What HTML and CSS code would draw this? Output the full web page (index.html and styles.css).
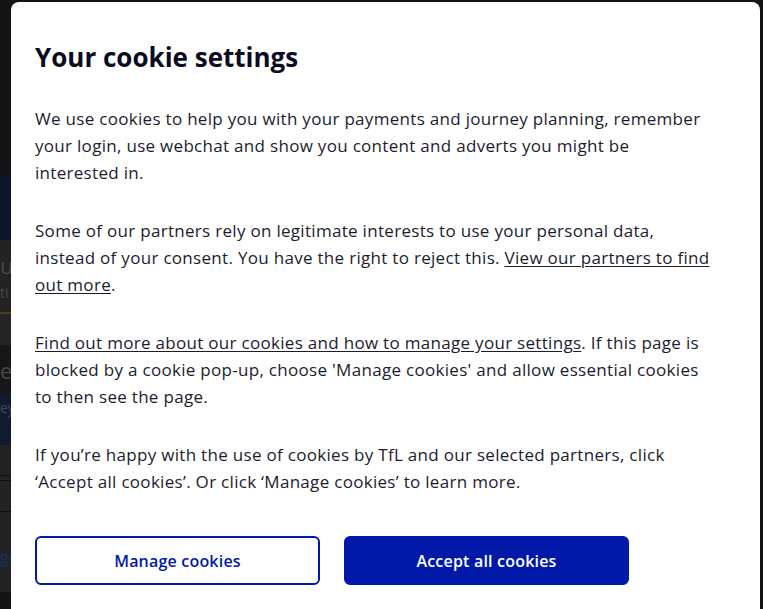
FILE: index.html
```html
<!DOCTYPE html>
<html lang="en">
<head>
<meta charset="utf-8">
<title>Your cookie settings</title>
<link rel="stylesheet" href="styles.css">
</head>
<body>
<div class="page">
  <div class="bg bg-top"></div>
  <div class="bg bg-navy"></div>
  <div class="bg bg-hero"><span class="bg-text">us</span><span class="bg-sub">ti</span></div>
  <div class="bg bg-rule"></div>
  <div class="bg bg-grey"></div>
  <div class="bg bg-dark"><span class="bg-text">ey</span></div>
  <div class="bg bg-blue"><span class="bg-sub">ey</span></div>
  <div class="bg bg-row"></div>
  <div class="bg bg-row bg-row-short"></div>
  <div class="bg bg-row"></div>
  <div class="bg bg-foot"><span class="bg-link">ge</span></div>
</div>
<div class="overlay"></div>
<div class="modal" role="dialog" aria-labelledby="cookie-title">
  <h2 id="cookie-title" class="modal-title">Your cookie settings</h2>
  <div class="modal-body">
    <p>We use cookies to help you with your payments and journey planning, remember<br>your login, use webchat and show you content and adverts you might be<br>interested in.</p>
    <p>Some of our partners rely on legitimate interests to use your personal data,<br>instead of your consent. You have the right to reject this. <a href="#">View our partners to find<br>out more</a>.</p>
    <p><a href="#">Find out more about our cookies and how to manage your settings</a>. If this page is<br>blocked by a cookie pop-up, choose 'Manage cookies' and allow essential cookies<br>to then see the page.</p>
    <p>If you’re happy with the use of cookies by TfL and our selected partners, click<br>‘Accept all cookies’. Or click ‘Manage cookies’ to learn more.</p>
  </div>
  <div class="modal-actions">
    <button class="btn btn-secondary" type="button">Manage cookies</button>
    <button class="btn btn-primary" type="button">Accept all cookies</button>
  </div>
</div>
</body>
</html>
```

FILE: styles.css
```css
html, body {
  margin: 0;
  padding: 0;
  height: 100%;
  overflow: hidden;
}
body {
  background: #18181b;
  font-family: "Open Sans", "Liberation Sans", sans-serif;
  color: #0b0c22;
}
.page {
  display: flex;
  flex-direction: column;
  width: 60px;
}
.bg { width: 100%; overflow: hidden; }
.bg-top { height: 175px; background: #17171b; }
.bg-navy { height: 65px; background: #111a32; }
.bg-hero { height: 72px; background: #2b2a29; display: flex; flex-direction: column; }
.bg-rule { height: 2px; background: #5a4a2a; }
.bg-grey { height: 31px; background: #2c2c2f; }
.bg-dark { height: 50px; background: #1c1c1f; }
.bg-blue { height: 50px; background: #142038; }
.bg-row { height: 30px; background: #2a2a2d; border-bottom: 1px solid #111113; }
.bg-row-short { height: 4px; }
.bg-foot { height: 80px; background: #2a2a2d; }
.bg-text { font-size: 22px; color: #55555a; line-height: 30px; padding-top: 10px; display: block; }
.bg-sub { font-size: 14px; color: #55555a; line-height: 18px; display: block; padding-top: 4px; }
.bg-link { font-size: 16px; color: #1f3a6a; display: block; padding-top: 34px; }

.overlay {
  position: fixed;
  inset: 0;
  background: rgba(0, 0, 0, 0.15);
}
.modal {
  position: fixed;
  left: 11px;
  top: 2px;
  width: 749px;
  height: 620px;
  box-sizing: border-box;
  background: #ffffff;
  border-radius: 8px;
  padding: 40px 24px 24px;
}
.modal-title {
  margin: 0 0 33px;
  font-size: 26px;
  line-height: 30px;
  font-weight: 700;
  color: #0b0c22;
}
.modal-body {
  width: 701px;
}
.modal-body p {
  margin: 0 0 31px;
  font-size: 17px;
  letter-spacing: 0.3px;
  line-height: 27px;
  color: #1b1c2e;
  white-space: nowrap;
}
.modal-body a {
  color: #1b1c2e;
  text-decoration: underline;
  text-underline-offset: 2px;
}
.modal-actions {
  display: flex;
  gap: 24px;
  margin-top: 41px;
}
.btn {
  width: 285px;
  height: 49px;
  border-radius: 6px;
  font-family: inherit;
  font-size: 16px;
  font-weight: 600;
  letter-spacing: 0.2px;
  cursor: pointer;
}
.btn-secondary {
  background: #ffffff;
  color: #0019a8;
  border: 2px solid #0019a8;
}
.btn-primary {
  background: #0019a8;
  color: #ffffff;
  border: 2px solid #0019a8;
}
```
